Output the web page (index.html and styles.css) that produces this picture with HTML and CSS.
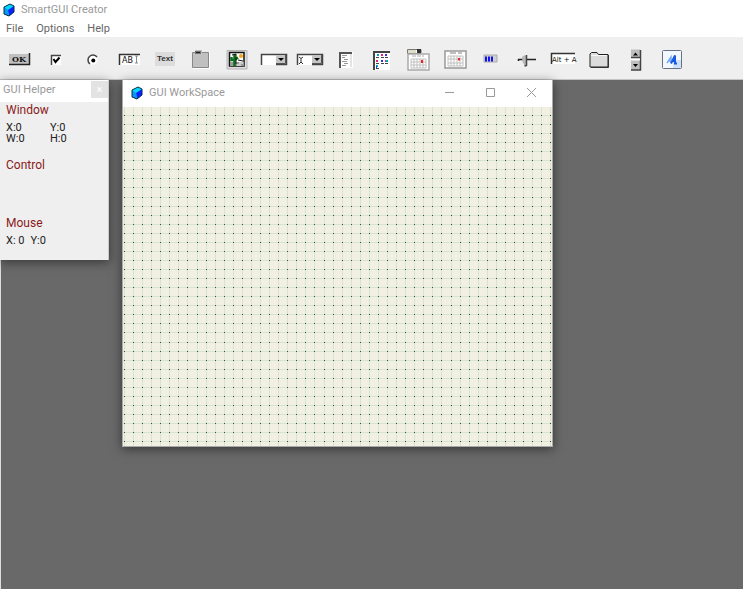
FILE: index.html
```html
<!DOCTYPE html>
<html lang="en">
<head>
<meta charset="utf-8">
<title>SmartGUI Creator</title>
<link rel="stylesheet" href="styles.css">
</head>
<body>
<svg class="defs" aria-hidden="true">
  <symbol id="cube" viewBox="0 0 12 14">
    <path d="M1 4 7 1 11 3V9L6 13 1 11Z" fill="#00d9f8"/>
    <path d="M5 7 11 3V9L6 13Z" fill="#0a20ff"/>
    <path d="M1 4 5 7 6 13 1 11Z" fill="#0898f0"/>
    <path d="M1 4 7 1 11 3V9L6 13 1 11Z" fill="none" stroke="#062c50"/>
  </symbol>
  <symbol id="arrowbox" viewBox="0 0 10 9">
    <path d="M0 0H10V9H0Z" fill="#c4c4c4"/>
    <path d="M0 8.500H9.500V0" fill="none" stroke="#555"/>
    <path d="M2 3H8L5 6Z" fill="#000"/>
  </symbol>
</svg>

<header class="titlebar">
  <svg class="cube"><use href="#cube"/></svg>
  <h1 class="title">SmartGUI Creator</h1>
</header>
<nav class="menu">
  <button>File</button><button>Options</button><button>Help</button>
</nav>

<div class="toolbar" role="toolbar" aria-label="Controls">
  <button class="tool" aria-label="Button"><svg viewBox="0 0 28 28">
    <path d="M3 7H24V19H3Z" fill="#c0c0c0"/><path d="M3 7.500H23" stroke="#eee"/><path d="M3 18.500H23.500V7" fill="none" stroke="#222" stroke-width="1.500"/>
    <text x="6" y="16" class="glyph serif">OK</text></svg></button>
  <button class="tool" aria-label="Checkbox"><svg viewBox="0 0 28 28">
    <path d="M9 9H19V19H9Z" fill="#fff"/><path d="M9.500 19V9.500H19" fill="none" stroke="#444" stroke-width="1.500"/><path d="M11.500 13 13.500 16 17.500 11.500" fill="none" stroke="#000" stroke-width="2"/></svg></button>
  <button class="tool" aria-label="Radio"><svg viewBox="0 0 28 28">
    <circle cx="14" cy="14" r="4.500" fill="#fff"/><path d="M11 18A5 5 0 1 1 18 11" fill="none" stroke="#444" stroke-width="1.500"/><circle cx="14.300" cy="14.500" r="2" fill="#000"/></svg></button>
  <button class="tool" aria-label="Edit"><svg viewBox="0 0 28 28">
    <path d="M4 8H25V19H4Z" fill="#fff"/><path d="M4.500 19V8.500H25" fill="none" stroke="#333" stroke-width="1.500"/>
    <text x="7" y="17" class="glyph">AB</text><path d="M20 10H21.500V17H20M23 10H21.500M23 17H21.500" fill="none" stroke="#888"/></svg></button>
  <button class="tool" aria-label="Text"><svg viewBox="0 0 28 28">
    <path d="M4 6H24V20H4Z" fill="#dcdcdc"/><text x="6" y="15" class="glyph strong">Text</text></svg></button>
  <button class="tool" aria-label="GroupBox"><svg viewBox="0 0 28 28">
    <path d="M5.500 6.500H21.500V21.500H5.500Z" fill="#c0c0c0" stroke="#888"/><path d="M6 22.500H22.500V6" fill="none" stroke="#fff"/><path d="M8 4H15V8H8Z" fill="#c0c0c0"/><path d="M9 5V8M11 5V8M13 5V8M9 6.500H13" stroke="#222"/></svg></button>
  <button class="tool" aria-label="Picture"><svg viewBox="0 0 28 28">
    <path d="M4 4.500H24V23H4Z" fill="#ddd" stroke="#b4b4b4"/><path d="M6.500 6.500H21V20H6.500Z" fill="#fff" stroke="#111" stroke-width="1.500"/>
    <path d="M7 16H21V20H7Z" fill="#9a9a9a"/><path d="M16 17H20M14 19H18" stroke="#fff"/><path d="M11.500 20V8M8.500 11V14H11.500L15 11.500" fill="none" stroke="#087018" stroke-width="2.500"/><path d="M9 9 13 8 13 18M15 14 20 15" fill="none" stroke="#111"/><circle cx="18" cy="10" r="2" fill="#f0a818"/></svg></button>
  <button class="tool" aria-label="DropDownList"><svg viewBox="0 0 28 28">
    <path d="M1 8H27V19H1Z" fill="#fff"/><path d="M1.500 19V8.500H26.500V18.500H16" fill="none" stroke="#444" stroke-width="1.500"/><use href="#arrowbox" x="16" y="9" width="10" height="9"/></svg></button>
  <button class="tool" aria-label="ComboBox"><svg viewBox="0 0 28 28">
    <path d="M1 8H27V19H1Z" fill="#fff"/><path d="M1.500 19V8.500H26.500V18.500H16" fill="none" stroke="#444" stroke-width="1.500"/><use href="#arrowbox" x="16" y="9" width="10" height="9"/><path d="M3 11 5 12.500V16L3 18M7 11 5 12.500M5 16 7 18" fill="none" stroke="#333"/></svg></button>
  <button class="tool" aria-label="ListBox"><svg viewBox="0 0 28 28">
    <path d="M7 6H21V22H7Z" fill="#fff"/><path d="M18 8H20V21H18Z" fill="#e4e4e4"/><path d="M8 22V7H20" fill="none" stroke="#555" stroke-width="2"/><path d="M10 9.500H15M10 11.500H13M12 13.500H16M10 15.500H15M12 17.500H16M10 19.500H14" stroke="#999"/></svg></button>
  <button class="tool" aria-label="ListView"><svg viewBox="0 0 28 28">
    <path d="M5 5H22V24H5Z" fill="#fff"/><path d="M6 24V6H22" fill="none" stroke="#444" stroke-width="2"/><path d="M8 11.500H11M13 11.500H16M17 11.500H20M8 17.500H11M13 17.500H16M17 17.500H20M8 22.500H11" stroke="#444"/>
    <path d="M9 9H11M18 15H20M8 20H10" stroke="#00a8c8" stroke-width="2"/><path d="M13 9H15M8 15H10M17 15H18" stroke="#e02080" stroke-width="2"/><path d="M17 9H19M13 15H15M8 21H9" stroke="#3830d0" stroke-width="2"/></svg></button>
  <button class="tool" aria-label="DateTime"><svg viewBox="0 0 28 28">
    <path d="M3.500 3.500H17V7.500H3.500Z" fill="#fff" stroke="#777"/><path d="M4 4H12V7H4Z" fill="#ddddc8"/><path d="M13 3H17V7H13Z" fill="#333"/>
    <path d="M4 8H25V24H4Z" fill="#fff" stroke="#aaa" stroke-width="1.500"/><path d="M8 10H20" stroke="#aaa" stroke-dasharray="4 1"/><path d="M7 13H22V22H7ZM7 16H22M7 19H22M10 13V22M13 13V22M16 13V22M19 13V22" fill="none" stroke="#c0c0c0"/><path d="M17 14H19V17H17Z" fill="#f02020"/></svg></button>
  <button class="tool" aria-label="MonthCal"><svg viewBox="0 0 28 28">
    <path d="M4 5H25V22H4Z" fill="#fff" stroke="#999" stroke-width="1.500"/><path d="M9 7H15M17 7H21" stroke="#aaa" stroke-width="1.500"/><path d="M7 10H22V20H7ZM7 13H22M7 17H22M10 10V20M13 10V20M16 10V20M19 10V20" fill="none" stroke="#c0c0c0"/><path d="M17 12H19V14.500H17Z" fill="#f02020"/></svg></button>
  <button class="tool" aria-label="Progress"><svg viewBox="0 0 28 28">
    <path d="M7 9H20V16H7Z" fill="#d0d0d0" stroke="#aaa"/><path d="M8 10.500H10V15.500H8ZM11 10.500H13V15.500H11ZM14 10.500H16V15.500H14Z" fill="#1010f0"/></svg></button>
  <button class="tool" aria-label="Slider"><svg viewBox="0 0 28 28">
    <path d="M5 13.500H23M5.500 13V15" fill="none" stroke="#222" stroke-width="1.500"/><path d="M9 11 11 9.500H14V20H12L9.500 16Z" fill="#b8b8b8"/><path d="M13.500 9V19.500L11.500 20" fill="none" stroke="#444" stroke-width="1.500"/></svg></button>
  <button class="tool" aria-label="Hotkey"><svg viewBox="0 0 28 28">
    <path d="M2 7H26V18H2Z" fill="#fff"/><path d="M2.500 18V7.500H26" fill="none" stroke="#333" stroke-width="1.500"/><text x="3" y="16" class="glyph small">Alt + A</text></svg></button>
  <button class="tool" aria-label="Tab"><svg viewBox="0 0 28 28">
    <path d="M5 21V8L6.500 6.500H12L13.500 8.500H23V21Z" fill="#dcdcdc" stroke="#222"/><path d="M6 9.500H22" stroke="#f8f8f8"/><path d="M6 21.500H23.500V9" fill="none" stroke="#333"/></svg></button>
  <button class="tool" aria-label="UpDown"><svg viewBox="0 0 28 28">
    <path d="M9 3.500H18V24H9Z" fill="#bdbdbd"/><path d="M9 11.500H18M9 24H18.500V4" fill="none" stroke="#444" stroke-width="1.500"/><path d="M9 13.500H18" stroke="#fff" stroke-width="2"/><path d="M11 9.500 13.500 6.500 16 9.500ZM11 18 13.500 21 16 18Z" fill="#000"/></svg></button>
  <button class="tool" aria-label="Font"><svg viewBox="0 0 28 28">
    <rect x="4.500" y="4.500" width="19" height="18" rx="1" fill="#f3f8ff" stroke="#667184"/><path d="M15 22V14H23V22Z" fill="#cfe0fa"/>
    <path d="M9 17 13 11V17M10 15H13" fill="none" stroke="#77a9f8" stroke-width="1.500"/><path d="M13 17.500 17 9.500V17.500M14.500 15H17M16 17.500H19" fill="none" stroke="#165be0" stroke-width="2"/></svg></button>
</div>

<main class="desktop">
  <section class="window helper">
    <header class="helper-bar"><h2 class="title">GUI Helper</h2><button class="helper-close" aria-label="Close">×</button></header>
    <div class="helper-body">
      <h3>Window</h3>
      <div class="values"><span>X:0</span><span>Y:0</span><span>W:0</span><span>H:0</span></div>
      <h3 class="control">Control</h3>
      <h3 class="mouse">Mouse</h3>
      <p class="position"><span>X: 0</span><span>Y:0</span></p>
    </div>
  </section>

  <section class="window workspace">
    <header class="work-bar">
      <svg class="cube"><use href="#cube"/></svg>
      <h2 class="title">GUI WorkSpace</h2>
      <button class="caption" aria-label="Minimize"><svg viewBox="0 0 11 11"><path d="M1 5.500H10"/></svg></button>
      <button class="caption" aria-label="Maximize"><svg viewBox="0 0 11 11"><path d="M1.500 1.500H9.500V9.500H1.500Z"/></svg></button>
      <button class="caption" aria-label="Close"><svg viewBox="0 0 11 11"><path d="M1 1 10 10M10 1 1 10"/></svg></button>
    </header>
    <svg class="canvas" id="grid" aria-label="Layout grid"></svg>
  </section>
</main>
<script src="grid.js"></script>
</body>
</html>
```
FILE: styles.css
```css
* { box-sizing: border-box; }
body {
  margin: 0;
  min-height: 100vh;
  display: flex;
  flex-direction: column;
  background: #fff;
  font-family: Roboto, "Noto Sans", sans-serif;
  font-size: 11px;
  line-height: 16px;
  color: #666;
}
h1, h2, h3, p { margin: 0; font-size: inherit; font-weight: 400; }
button { margin: 0; padding: 0; border: 0; background: none; font: inherit; color: inherit; }
svg { display: block; }
.defs { position: absolute; width: 0; height: 0; }
.cube { width: 12px; height: 14px; flex: none; }
.title { color: #999; white-space: nowrap; }

.titlebar { display: flex; align-items: center; gap: 6px; height: 20px; padding: 0 3px; }
.menu { display: flex; gap: 13px; height: 17px; padding: 1px 6px; }

.toolbar {
  display: grid;
  grid-template-columns: repeat(19, 1fr);
  height: 43px;
  padding: 9px 53px 0 2px;
  background: #efefef;
  border-bottom: 1px solid #c4c4c4;
}
.tool { display: flex; justify-content: center; min-width: 0; height: 28px; }
.tool svg { width: 28px; height: 28px; flex: none; }
.glyph { font: 8px "DejaVu Sans", sans-serif; fill: #111; }
.glyph.serif { font: bold 8px "DejaVu Serif", serif; }
.glyph.strong { font: bold 8px "Liberation Sans", sans-serif; fill: #333; }
.glyph.small { font: 7px "DejaVu Sans", sans-serif; }

.desktop { position: relative; flex: 1; background: #696969; border-left: 1px solid #ddd; }
.window { position: absolute; top: 0; box-shadow: 0 2px 10px rgba(0, 0, 0, .5); }

.helper { left: -1px; width: 109px; height: 180px; background: #efefef; border-right: 1px solid #ccc; }
.helper-bar { display: flex; justify-content: space-between; height: 22px; padding: 1px 0 0 3px; background: #fff; }
.helper-bar .title { padding-top: 1px; }
.helper-close { width: 17px; height: 17px; background: #e3e3e3; color: #fff; }
.helper-body { padding: 0 6px; color: #222; }
.helper-body h3 { color: #8b1a1a; font-size: 12px; }
.values { display: grid; grid-template-columns: 44px 44px; line-height: 11px; padding-top: 4px; }
.helper-body .control { padding-top: 13px; }
.helper-body .mouse { padding-top: 42px; }
.position { display: flex; gap: 6px; padding-top: 2px; }

.workspace { left: 121px; width: 431px; border: 1px solid #aaa; border-top: 0; }
.work-bar { display: flex; align-items: center; height: 27px; padding: 0 0 2px 8px; background: #fff; }
.work-bar .title { flex: 1; padding-left: 6px; }
.caption { display: flex; align-items: center; justify-content: center; width: 41px; height: 25px; }
.caption svg { width: 11px; height: 11px; fill: none; stroke: #999; }
.canvas { width: 100%; height: 339px; background: #f2f0e3; }
.line { fill: none; stroke: #d8e5ce; }
.dots { fill: none; stroke: #3c5142; }
```
FILE: grid.js
```js
// Draws the alignment grid: faint lines with a dot at each crossing.
const canvas = document.getElementById("grid");
const width = canvas.clientWidth || 429;
const height = canvas.clientHeight || 339;
const columns = Math.floor(width / 9);
const rows = Math.floor(height / 9);
const add = (name, d) => {
  const path = document.createElementNS("http://www.w3.org/2000/svg", "path");
  path.setAttribute("class", name);
  path.setAttribute("d", d);
  canvas.appendChild(path);
};
// Positions are rounded to whole pixels, then centred on the pixel.
const xs = [];
const ys = [];
for (let i = 0; i <= columns; i++) xs.push(Math.round(1 + i * 9.07) + 0.5);
for (let i = 0; i < rows; i++) ys.push(Math.round(8 + i * 9.06) + 0.5);
add("line", xs.map(x => `M${x} 0V${height}`).join("") + ys.map(y => `M0 ${y}H${width}`).join(""));
add("dots", ys.map(y => xs.map(x => `M${x - 0.5} ${y}h1`).join("")).join(""));
```
